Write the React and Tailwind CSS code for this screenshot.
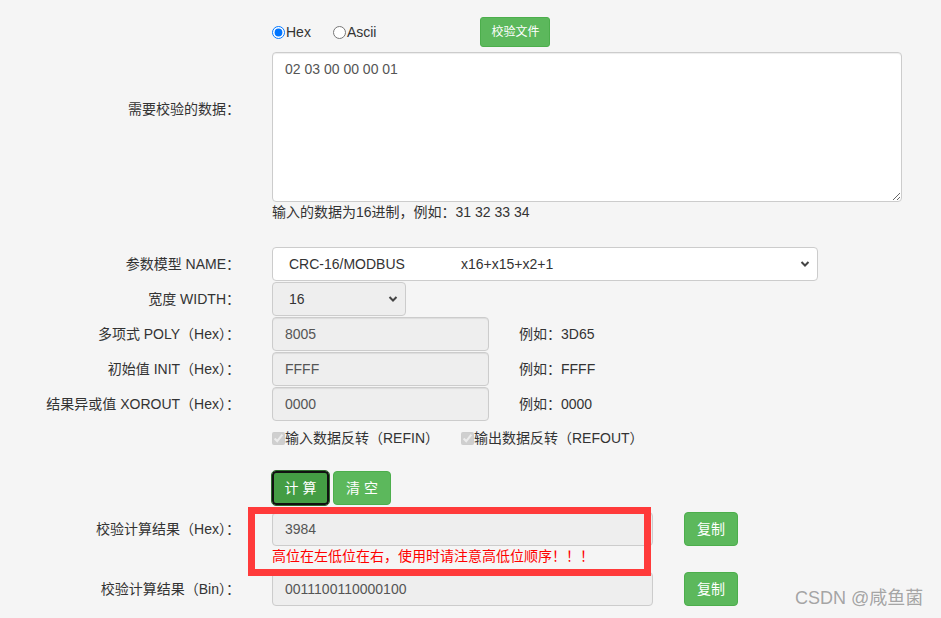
import React from "react";

function Chevron() {
  return (
    <svg width="10" height="7" viewBox="0 0 10 7" className="absolute right-[7px] top-1/2 -translate-y-1/2">
      <path d="M1.5 1.5 L5 5 L8.5 1.5" fill="none" stroke="#444" strokeWidth="2" />
    </svg>
  );
}

function Label({ children, className = "" }) {
  return <div className={"w-[240px] shrink-0 text-right " + className}>{children}</div>;
}

const inputCls =
  "h-[34px] rounded-[4px] border border-[#ccc] bg-[#eee] pl-[12px] text-[#555] flex items-center shadow-[inset_0_1px_1px_rgba(0,0,0,0.075)]";

export default function App() {
  return (
    <div className="relative w-[941px] h-[618px] overflow-hidden bg-[#f5f5f5] text-[14px] leading-[20px] text-[#333] font-['Liberation_Sans','Noto_Sans_CJK_SC',sans-serif]">
      <div className="flex flex-col pt-[17px]">
        {/* data row */}
        <div className="flex">
          <Label className="pt-[82px]">需要校验的数据：</Label>
          <div className="ml-[32px] flex flex-col">
            <div className="flex items-center h-[30px]">
              <label className="flex items-center">
                <input type="radio" name="fmt" defaultChecked className="m-0 w-[13px] h-[13px]" />
                <span className="ml-[1px]">Hex</span>
              </label>
              <label className="flex items-center ml-[22px]">
                <input type="radio" name="fmt" className="m-0 w-[13px] h-[13px]" />
                <span className="ml-[1px]">Ascii</span>
              </label>
              <button className="ml-[104px] h-[30px] w-[70px] rounded-[3px] border border-[#4cae4c] bg-[#5cb85c] text-[12px] text-white">
                校验文件
              </button>
            </div>
            <textarea
              defaultValue="02 03 00 00 00 01"
              className="mt-[5px] w-[630px] h-[150px] rounded-[4px] border border-[#ccc] bg-white px-[12px] py-[6px] text-[14px] leading-[20px] text-[#555] outline-none shadow-[inset_0_1px_1px_rgba(0,0,0,0.075)] resize-y"
            />
            <div>输入的数据为16进制，例如：31 32 33 34</div>
          </div>
        </div>

        {/* NAME */}
        <div className="flex items-center mt-[25px] h-[34px]">
          <Label>参数模型 NAME：</Label>
          <div className="ml-[32px] relative w-[546px] h-[34px] rounded-[4px] border border-[#ccc] bg-white pl-[16px] flex items-center text-[#333]">
            <span className="w-[172px]">CRC-16/MODBUS</span>
            <span>x16+x15+x2+1</span>
            <Chevron />
          </div>
        </div>

        {/* WIDTH */}
        <div className="flex items-center mt-[1px] h-[34px]">
          <Label>宽度 WIDTH：</Label>
          <div className="ml-[32px] relative w-[134px] h-[34px] rounded-[4px] border border-[#ccc] bg-[#eee] pl-[16px] flex items-center text-[#333]">
            <span>16</span>
            <Chevron />
          </div>
        </div>

        {/* POLY */}
        <div className="flex items-center mt-[1px] h-[34px]">
          <Label>多项式 POLY（Hex）：</Label>
          <div className={"ml-[32px] w-[217px] " + inputCls}>8005</div>
          <div className="ml-[30px]">例如：3D65</div>
        </div>

        {/* INIT */}
        <div className="flex items-center mt-[1px] h-[34px]">
          <Label>初始值 INIT（Hex）：</Label>
          <div className={"ml-[32px] w-[217px] " + inputCls}>FFFF</div>
          <div className="ml-[30px]">例如：FFFF</div>
        </div>

        {/* XOROUT */}
        <div className="flex items-center mt-[1px] h-[34px]">
          <Label>结果异或值 XOROUT（Hex）：</Label>
          <div className={"ml-[32px] w-[217px] " + inputCls}>0000</div>
          <div className="ml-[30px]">例如：0000</div>
        </div>

        {/* checkboxes */}
        <div className="flex items-center mt-[7px] h-[20px]">
          <div className="w-[240px] shrink-0" />
          <label className="ml-[32px] flex items-center">
            <input type="checkbox" defaultChecked disabled className="m-0 w-[13px] h-[13px]" />
            <span>输入数据反转（REFIN）</span>
          </label>
          <label className="ml-[22px] flex items-center">
            <input type="checkbox" defaultChecked disabled className="m-0 w-[13px] h-[13px]" />
            <span>输出数据反转（REFOUT）</span>
          </label>
        </div>

        {/* buttons */}
        <div className="flex items-center mt-[23px] h-[34px]">
          <div className="w-[240px] shrink-0" />
          <button className="ml-[32px] h-[34px] w-[57px] rounded-[4px] border-2 border-[#111] outline outline-1 outline-[#2d6a2d] bg-[#449d44] text-white tracking-[4px] pl-[4px]">
            计算
          </button>
          <button className="ml-[4px] h-[34px] w-[58px] rounded-[4px] border border-[#4cae4c] bg-[#5cb85c] text-white tracking-[4px] pl-[4px]">
            清空
          </button>
        </div>

        {/* hex result */}
        <div className="flex items-center mt-[7px] h-[34px]">
          <Label>校验计算结果（Hex）：</Label>
          <div className={"ml-[32px] w-[381px] " + inputCls}>3984</div>
          <button className="ml-[31px] h-[34px] w-[54px] rounded-[4px] border border-[#4cae4c] bg-[#5cb85c] text-white">
            复制
          </button>
        </div>
        <div className="flex">
          <div className="w-[240px] shrink-0" />
          <div className="ml-[32px] text-[#ff0000]">高位在左低位在右，使用时请注意高低位顺序！！！</div>
        </div>

        {/* bin result */}
        <div className="flex items-center mt-[6px] h-[34px]">
          <Label>校验计算结果（Bin）：</Label>
          <div className={"ml-[32px] w-[381px] " + inputCls}>0011100110000100</div>
          <button className="ml-[31px] h-[34px] w-[54px] rounded-[4px] border border-[#4cae4c] bg-[#5cb85c] text-white">
            复制
          </button>
        </div>
      </div>

      {/* annotation box */}
      <div className="absolute left-[248px] top-[507px] w-[403px] h-[69px] border-[7px] border-[#ff3a3a]" />

      {/* watermark */}
      <div className="absolute left-[795px] top-[587px] text-[18px] leading-[22px] text-[#9a9a9a]/90">
        CSDN @咸鱼菌
      </div>
    </div>
  );
}
